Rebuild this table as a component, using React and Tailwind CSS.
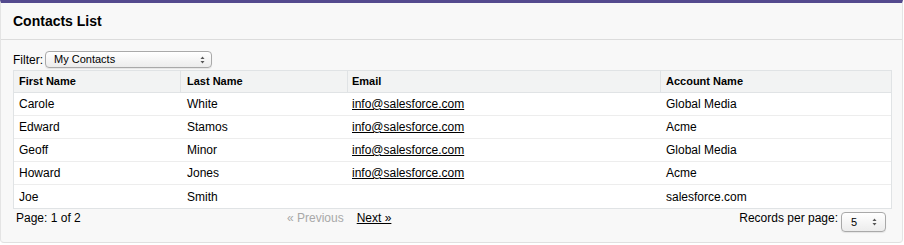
import React from "react";

const contacts = [
  { first: "Carole", last: "White", email: "info@salesforce.com", account: "Global Media" },
  { first: "Edward", last: "Stamos", email: "info@salesforce.com", account: "Acme" },
  { first: "Geoff", last: "Minor", email: "info@salesforce.com", account: "Global Media" },
  { first: "Howard", last: "Jones", email: "info@salesforce.com", account: "Acme" },
  { first: "Joe", last: "Smith", email: "", account: "salesforce.com" },
];

function UpDown() {
  return (
    <svg width="5" height="8" viewBox="0 0 5 8" className="shrink-0">
      <path d="M2.5 0.5 L4.5 3 L0.5 3 Z" fill="#555" />
      <path d="M2.5 7.5 L4.5 5 L0.5 5 Z" fill="#555" />
    </svg>
  );
}

function FakeSelect({ value, className }) {
  return (
    <div
      className={
        "flex items-center justify-between rounded-[4px] border border-[#a9a9a9] bg-gradient-to-b from-white to-[#ececec] shadow-[0_1px_1px_rgba(0,0,0,0.08)] text-[11px] text-black " +
        className
      }
    >
      <span>{value}</span>
      <UpDown />
    </div>
  );
}

export default function App() {
  return (
    <div className="w-[904px] h-[245px] bg-white font-['Liberation_Sans',Arial,sans-serif] text-black">
      <div className="w-[903px] h-[243px] bg-[#f8f8f8] border-t-[3px] border-t-[#544a8e] border-x border-b border-x-[#e4e4e4] border-b-[#e0e0e0] rounded-b-[4px] flex flex-col">
        {/* header */}
        <div className="h-[37px] border-b border-[#dcdcdc] flex items-center pl-[12px] pb-[1px]">
          <h2 className="text-[14px] font-bold leading-none">Contacts List</h2>
        </div>

        {/* filter */}
        <div className="flex items-center pl-[12px] mt-[11px] h-[17px]">
          <span className="text-[12px] mr-[2px]">Filter:</span>
          <FakeSelect value="My Contacts" className="w-[167px] h-[17px] pl-[8px] pr-[6px]" />
        </div>

        {/* table */}
        <div className="ml-[12px] mt-[2px] w-[879px] border border-[#e0e3e5] bg-white">
          <div className="flex h-[22px] bg-[#f2f3f3] border-b border-[#e0e3e5] text-[11px] font-bold">
            <div className="w-[167px] border-r border-[#e0e3e5] pl-[5px] flex items-center">First Name</div>
            <div className="w-[167px] border-r border-[#e0e3e5] pl-[6px] flex items-center">Last Name</div>
            <div className="w-[313px] border-r border-[#e0e3e5] pl-[4px] flex items-center">Email</div>
            <div className="flex-1 pl-[5px] flex items-center">Account Name</div>
          </div>
          {contacts.map((c, i) => (
            <div
              key={c.first}
              className={
                "flex h-[23px] items-center text-[12px] " +
                (i < contacts.length - 1 ? "border-b border-[#ededed]" : "")
              }
            >
              <div className="w-[167px] pl-[5px]">{c.first}</div>
              <div className="w-[167px] pl-[6px]">{c.last}</div>
              <div className="w-[313px] pl-[4px]">
                {c.email && <a className="underline">{c.email}</a>}
              </div>
              <div className="flex-1 pl-[5px]">{c.account}</div>
            </div>
          ))}
        </div>

        {/* pagination */}
        <div className="flex items-start text-[12px] pl-[15px] pr-[16px]">
          <div className="w-[271px]">Page: 1 of 2</div>
          <div className="flex gap-[13px]">
            <span className="text-[#a8a8a8]">« Previous</span>
            <a className="underline">Next »</a>
          </div>
          <div className="flex-1 flex justify-end items-start">
            <span className="mr-[3px]">Records per page:</span>
            <FakeSelect value="5" className="w-[45px] h-[20px] mt-[3px] pl-[9px] pr-[8px]" />
          </div>
        </div>
      </div>
    </div>
  );
}
